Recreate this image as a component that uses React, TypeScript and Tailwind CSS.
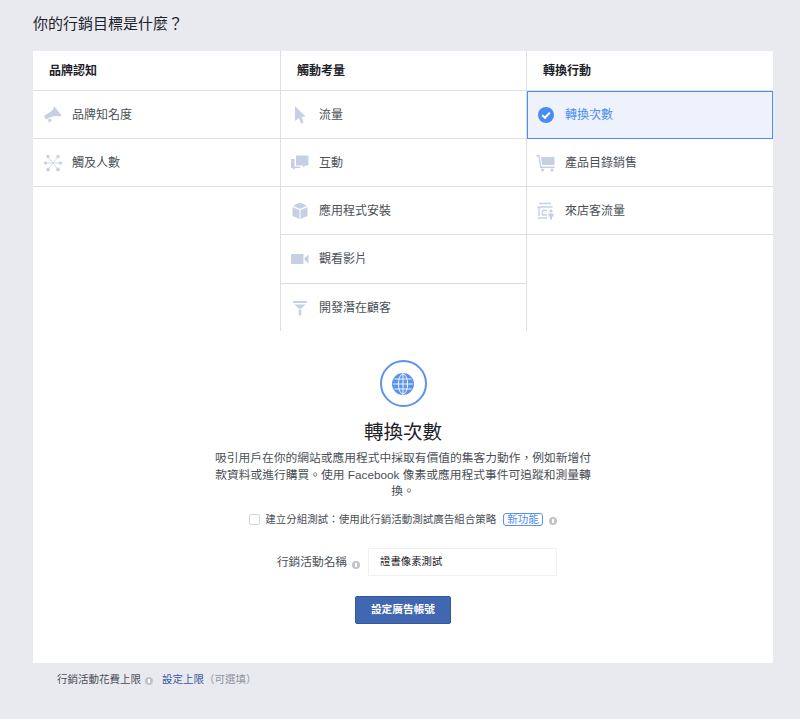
import type { ReactNode } from 'react';

const tone = '#c6cfe3';

function Megaphone() {
  return (
    <svg width="20" height="18" viewBox="0 0 20 18" fill={tone}>
      <path d="M11.5 0.5 L18.5 9.5 L16.5 10.5 C14 9.5 10 10 6.5 11.5 L3 13.5 L1 10 L5 7.5 C8 5.5 10.5 3.5 11.5 0.5 Z" />
      <path d="M5 13.5 L8 12.5 L8.8 15 L6 16.5 Z" />
    </svg>
  );
}

function Spark() {
  return (
    <svg width="20" height="18" viewBox="0 0 20 18" fill={tone} stroke={tone} strokeWidth="0.8">
      <path d="M10 9 L5 3 M10 9 L15 3 M10 9 L2.5 9 M10 9 L17.5 9 M10 9 L5 15.5 M10 9 L15 15.5" fill="none" />
      <circle cx="5" cy="2.5" r="1.3" />
      <circle cx="15" cy="2.5" r="1.3" />
      <circle cx="2.5" cy="9" r="1.3" />
      <circle cx="17.5" cy="9" r="1.3" />
      <circle cx="5" cy="15.5" r="1.5" />
      <circle cx="15" cy="15.5" r="1.5" />
    </svg>
  );
}

function Pointer() {
  return (
    <svg width="20" height="20" viewBox="0 0 20 20" fill={tone}>
      <path d="M5 1 L15.5 11.5 L11.5 12 L13.5 17.5 L11 18.5 L9 13 L5 16 Z" />
    </svg>
  );
}

function Chat() {
  return (
    <svg width="20" height="18" viewBox="0 0 20 18" fill={tone}>
      <path d="M6 1.5 H18.5 V11.5 H15.5 L13 13.5 V11.5 H6 Z" />
      <path d="M1 5 H4.5 V12.5 H10 V14 H5.5 L3 16 V14 H1 Z" />
    </svg>
  );
}

function Box() {
  return (
    <svg width="20" height="20" viewBox="0 0 20 20" fill={tone}>
      <path d="M10 1.5 L17 4.8 L10 8 L3 4.8 Z" />
      <path d="M2.5 6 L9.5 9.2 V18 L2.5 15 Z" />
      <path d="M17.5 6 L10.5 9.2 V18 L17.5 15 Z" />
    </svg>
  );
}

function Camera() {
  return (
    <svg width="20" height="14" viewBox="0 0 20 14" fill={tone}>
      <rect x="1" y="2" width="12.5" height="10" rx="0.8" />
      <path d="M14.5 6 L18.5 2.5 V11.5 L14.5 8 Z" />
    </svg>
  );
}

function Funnel() {
  return (
    <svg width="20" height="20" viewBox="0 0 20 20" fill={tone}>
      <rect x="3" y="3" width="14" height="2" />
      <path d="M4.5 6.5 H15.5 L11.5 10.5 H8.5 Z" />
      <rect x="8.8" y="11.5" width="2.4" height="6" />
    </svg>
  );
}

function Cart() {
  return (
    <svg width="20" height="20" viewBox="0 0 20 20" fill={tone}>
      <path d="M0.5 2 H3.5 L5.5 13.5 H18.5 V15 H4.2 L2.4 3.5 H0.5 Z" />
      <path d="M5 4 H18.5 V12 H6.2 Z" />
      <circle cx="6.5" cy="17" r="1.5" />
      <circle cx="16" cy="17" r="1.5" />
    </svg>
  );
}

function Store() {
  return (
    <svg width="20" height="20" viewBox="0 0 20 20" fill="none" stroke={tone} strokeWidth="1.4">
      <path d="M3 2.5 H15 M1.5 6 H16.5 M3 6 V15 M1.5 17 H11 M6.5 9.5 H11 M6.5 9.5 V14 H11" />
      <circle cx="15" cy="10" r="1.6" fill={tone} stroke="none" />
      <path d="M12.5 12.5 H17.5 V15.5 H16 V18.5 H14 V15.5 H12.5 Z" fill={tone} stroke="none" />
    </svg>
  );
}

function CheckBadge() {
  return (
    <svg width="18" height="18" viewBox="0 0 18 18">
      <circle cx="9" cy="9" r="8" fill="#4a8cf0" />
      <path d="M5.2 9.2 L8 11.8 L12.8 6.6" fill="none" stroke="#fff" strokeWidth="2" />
    </svg>
  );
}

function Globe() {
  return (
    <svg width="24" height="24" viewBox="0 0 24 24" fill="none">
      <circle cx="12" cy="12" r="11" fill="#5b93ec" />
      <g stroke="#fff" strokeWidth="0.9">
        <ellipse cx="12" cy="12" rx="4.6" ry="10" />
        <path d="M12 1.5 V22.5 M2 12 H22 M3.5 7 H20.5 M3.5 17 H20.5" />
      </g>
    </svg>
  );
}

function Info() {
  return (
    <span className="inline-flex h-[8px] w-[8px] shrink-0 items-center justify-center rounded-full bg-[#c0c3c9]">
      <span className="h-[4px] w-[2px] bg-white" />
    </span>
  );
}

function Row({
  icon,
  label,
  active,
  first,
  tall,
}: {
  icon: ReactNode;
  label: string;
  active?: boolean;
  first?: boolean;
  tall?: boolean;
}) {
  return (
    <div
      className={
        active
          ? 'flex h-[48px] items-center border border-[#4a90f5] bg-[#eef2fc] text-[#4a8cf0]'
          : tall
            ? 'flex h-[49px] items-center border-b border-[#d8dae1] text-[#4b4f56]'
            : 'flex h-[48px] items-center border-b border-[#dddfe6] text-[#4b4f56]'
      }
    >
      <span className={first ? 'ml-[10px] flex w-[20px] shrink-0 justify-center' : active ? 'ml-[8px] flex w-[20px] shrink-0 justify-center' : 'ml-[9px] flex w-[20px] shrink-0 justify-center'}>
        {icon}
      </span>
      <span className="ml-[9px] text-[12px]">{label}</span>
    </div>
  );
}

function Column({ title, children, last }: { title: string; children: ReactNode; last?: boolean }) {
  return (
    <div className={last ? 'flex flex-col' : 'flex flex-col border-r border-[#dddfe6]'}>
      <div className="flex h-[40px] items-center border-b border-[#dddfe6] pl-[16px] text-[12px] font-bold text-[#1d2129]">
        {title}
      </div>
      {children}
    </div>
  );
}

export default function App() {
  return (
    <div
      className="h-[719px] overflow-hidden bg-[#e9eaf0] px-[33px] pt-[14px]"
      style={{ fontFamily: '"Liberation Sans", "Noto Sans CJK TC", sans-serif' }}
    >
      <h1 className="h-[37px] text-[15px] leading-[20px] text-[#1d2129]">你的行銷目標是什麼？</h1>

      <div className="w-[740px] bg-white">
        <div className="grid h-[280px] grid-cols-[248px_246px_246px]">
          <Column title="品牌認知">
            <Row icon={<Megaphone />} label="品牌知名度" first />
            <Row icon={<Spark />} label="觸及人數" first />
          </Column>
          <Column title="觸動考量">
            <Row icon={<Pointer />} label="流量" />
            <Row icon={<Chat />} label="互動" />
            <Row icon={<Box />} label="應用程式安裝" />
            <Row icon={<Camera />} label="觀看影片" tall />
            <div className="flex h-[47px] items-center text-[#4b4f56]">
              <span className="ml-[9px] flex w-[20px] shrink-0 justify-center">
                <Funnel />
              </span>
              <span className="ml-[9px] text-[12px]">開發潛在顧客</span>
            </div>
          </Column>
          <Column title="轉換行動" last>
            <Row icon={<CheckBadge />} label="轉換次數" active />
            <Row icon={<Cart />} label="產品目錄銷售" />
            <Row icon={<Store />} label="來店客流量" />
          </Column>
        </div>

        <div className="flex h-[332px] flex-col items-center pt-[29px]">
          <div className="flex h-[47px] w-[47px] items-center justify-center rounded-full border-2 border-[#5b93ec]">
            <Globe />
          </div>
          <h2 className="mt-[11px] text-[19.5px] leading-[28px] text-[#1d2129]">轉換次數</h2>
          <p className="mt-[4px] w-[385px] text-center text-[11.75px] leading-[16.5px] text-[#4b4f56]">
            吸引用戶在你的網站或應用程式中採取有價值的集客力動作，例如新增付款資料或進行購買。使用 Facebook 像素或應用程式事件可追蹤和測量轉換。
          </p>

          <div className="mt-[13px] flex h-[14px] items-center text-[10.5px] text-[#4b4f56]">
            <span className="h-[11px] w-[11px] rounded-[2px] border border-[#d5d7dd] bg-white" />
            <span className="ml-[5px]">建立分組測試：使用此行銷活動測試廣告組合策略</span>
            <span className="ml-[7px] rounded-[3px] border border-[#5b93ec] px-[3px] text-[10.5px] leading-[11px] text-[#4a8cf0]">
              新功能
            </span>
            <span className="ml-[6px]">
              <Info />
            </span>
          </div>

          <div className="ml-[28px] mt-[21px] flex items-center">
            <span className="text-[11.7px] text-[#4b4f56]">行銷活動名稱</span>
            <span className="ml-[5px]">
              <Info />
            </span>
            <div className="ml-[8px] flex h-[28px] w-[189px] items-center border border-[#f0f1f4] pl-[11px] text-[10.4px] text-[#1d2129]">
              證書像素測試
            </div>
          </div>

          <button className="mt-[20px] h-[28px] w-[96px] rounded-[2px] border border-[#34589e] bg-[#4067b0] text-[10.7px] font-bold text-white">
            設定廣告帳號
          </button>
        </div>
      </div>

      <div className="flex items-center pl-[24px] pt-[9px] text-[10.5px] leading-[14px] text-[#4b4f56]">
        <span>行銷活動花費上限</span>
        <span className="ml-[4px]">
          <Info />
        </span>
        <span className="ml-[9px] text-[#365899]">設定上限</span>
        <span className="text-[#90949c]">（可選填）</span>
      </div>
    </div>
  );
}
